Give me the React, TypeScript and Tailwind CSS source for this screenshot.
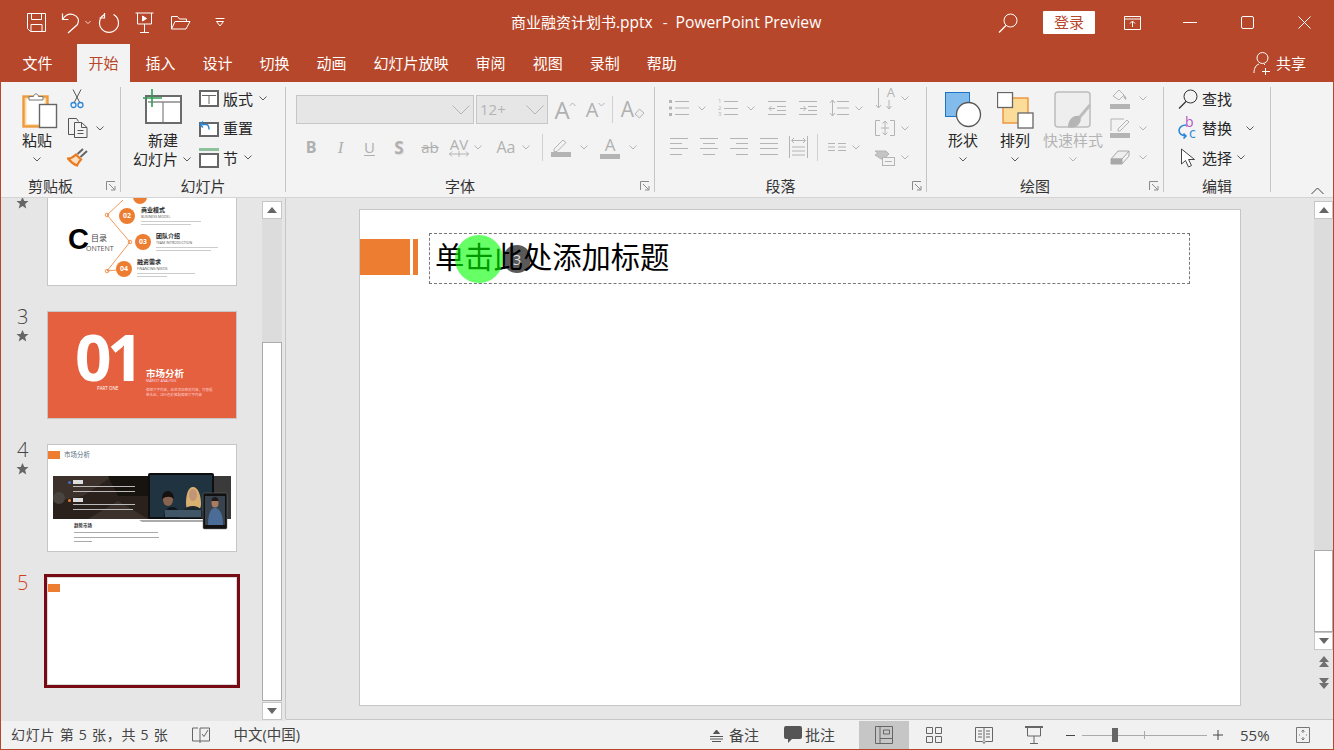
import React from 'react'

const GRAY = '#b4b4b4'
const DARK = '#5a5a5a'

function Chev({ c = DARK, className = '' }: { c?: string; className?: string }) {
  return (
    <span className={`flex w-[12px] shrink-0 justify-center ${className}`}>
      <svg width="8" height="5" viewBox="0 0 8 5" fill="none" stroke={c}>
        <path d="M.5.5 4 4 7.5.5" />
      </svg>
    </span>
  )
}

function Launcher() {
  return (
    <svg className="absolute right-[4px] top-[4px]" width="10" height="10" viewBox="0 0 10 10" fill="none" stroke="#8a8a8a">
      <path d="M.5 9V.5H9" />
      <path d="M3 3l5.500 5.500M9 5v4H5" />
    </svg>
  )
}

function Group({ w, label, launcher, children }: { w: string; label: string; launcher?: boolean; children: React.ReactNode }) {
  return (
    <>
      <div className={`flex h-full shrink-0 flex-col ${w}`}>
        <div className="flex h-[95px]">{children}</div>
        <div className={`relative h-[18px] text-center text-[15px] leading-[18px] text-[#333] ${launcher ? 'pr-[20px]' : ''}`}>
          {label}
          {launcher && <Launcher />}
        </div>
      </div>
      <div className="mt-[5px] h-[105px] w-px shrink-0 bg-[#c6c6c6]" />
    </>
  )
}

function SmallRow({ className = '', children }: { className?: string; children: React.ReactNode }) {
  return <div className={`flex h-[29.5px] items-center ${className}`}>{children}</div>
}

function BigBtn({ w, icon, label, disabled }: { w: string; icon: React.ReactNode; label: string; disabled?: boolean }) {
  return (
    <div className={`flex shrink-0 flex-col items-center pt-[9px] ${w}`}>
      <div className="flex h-[38px] items-center justify-center">{icon}</div>
      <div className={`mt-[1px] whitespace-nowrap text-[15px] leading-[20px] ${disabled ? 'text-[#b4b4b4]' : 'text-[#262626]'}`}>{label}</div>
      <Chev c={disabled ? GRAY : DARK} className="mt-[7px]" />
    </div>
  )
}

/* ---------- title bar icons ---------- */
function TitleIcons() {
  return (
    <div className="flex w-[510px] shrink-0 items-center pl-[25px] text-white">
      <svg width="21" height="21" viewBox="0 0 21 21" fill="none" stroke="#fff">
        <path d="M1.500 1.500h18v18h-15l-3-3z" />
        <path d="M5.500 1.500v6h10v-6M5 19.500v-7h11v7" />
      </svg>
      <svg className="ml-[14px]" width="20" height="22" viewBox="0 0 20 22" fill="none" stroke="#fff" strokeWidth="1.200">
        <path d="M1.500 1.500v6h6" />
        <path d="M1.500 7.500C4 3.500 8 1.500 12 2.500c5 1.500 7 6 4.500 10L7 21" />
      </svg>
      <Chev c="#fff" className="ml-[1px] scale-75" />
      <svg className="ml-[4px]" width="22" height="22" viewBox="0 0 22 22" fill="none" stroke="#fff" strokeWidth="1.200">
        <path d="M15.500 2.500a9.500 9.500 0 1 1-9 0" />
        <path d="M6.500 1v5H1.500" />
      </svg>
      <svg className="ml-[15px]" width="19" height="21" viewBox="0 0 19 21" fill="none" stroke="#fff">
        <path d="M.5 1h18M2.500 1v11h14V1M9.500 12v8M5 20.500h9" />
        <path d="M7.500 4v5l4-2.500z" fill="#fff" />
      </svg>
      <svg className="ml-[16px]" width="21" height="15" viewBox="0 0 21 15" fill="none" stroke="#fff">
        <path d="M1.500 14V1.500h6l2 2.500h7v2.500" />
        <path d="M1.500 14h14.500l4-7.500H5z" />
      </svg>
      <svg className="ml-[24px]" width="10" height="9" viewBox="0 0 10 9" fill="none" stroke="#fff">
        <path d="M.5.5h9M1.500 3.500 5 8l3.500-4.500z" />
      </svg>
    </div>
  )
}

function WindowButtons() {
  return (
    <div className="ml-auto flex items-center">
      <svg width="20" height="20" viewBox="0 0 20 20" fill="none" stroke="#fff">
        <circle cx="12.500" cy="7.500" r="6.500" />
        <path d="M8 12.500 1 19.500" strokeWidth="1.300" />
      </svg>
      <button className="ml-[25px] flex h-[23px] w-[52px] items-center justify-center rounded-[1px] bg-white text-[15px] leading-none text-[#b7472a]">登录</button>
      <svg className="ml-[29px]" width="17" height="14" viewBox="0 0 17 14" fill="none" stroke="#fff">
        <path d="M.5.500h16v13H.500zM.5 3h16" />
        <path d="M8.500 11V5.500M6 7.500l2.500-2.500L11 7.500" />
      </svg>
      <div className="ml-[42px] h-px w-[14px] bg-white" />
      <svg className="ml-[44px]" width="13" height="13" viewBox="0 0 13 13" fill="none" stroke="#fff">
        <rect x=".5" y=".5" width="12" height="12" rx="1.500" />
      </svg>
      <svg className="ml-[44px] mr-[22px]" width="13" height="13" viewBox="0 0 13 13" fill="none" stroke="#fff">
        <path d="M.5.5l12 12M12.500.5l-12 12" />
      </svg>
    </div>
  )
}

/* ---------- ribbon icons ---------- */
function PasteIcon() {
  return (
    <svg className="ml-[6px]" width="36" height="38" viewBox="0 0 36 38" fill="none">
      <rect x="1.500" y="5.500" width="24" height="30" fill="#fddca8" stroke="#ed9a3e" strokeWidth="2.400" />
      <rect x="4.500" y="8" width="18" height="25" fill="#fff" />
      <path d="M7 9V5.500h4.500C12 2 16 2 16.500 5.500H21V9z" fill="#fff" stroke="#777" />
      <rect x="17.500" y="13.500" width="17" height="23" fill="#fff" stroke="#666" strokeWidth="1.400" />
    </svg>
  )
}

function Scissors() {
  return (
    <svg width="14" height="20" viewBox="0 0 14 20" fill="none">
      <path d="M3 .5 9.500 13M11 .5 4.500 13" stroke="#555" />
      <circle cx="3.500" cy="16" r="2.500" stroke="#2b88d8" strokeWidth="1.300" />
      <circle cx="10.500" cy="16" r="2.500" stroke="#2b88d8" strokeWidth="1.300" />
    </svg>
  )
}

function CopyIcon() {
  return (
    <svg width="22" height="20" viewBox="0 0 22 20" fill="none" stroke="#555">
      <path d="M7 16.500H1.500V.5h8l2 3" />
      <path d="M7.500 4.500h7l5.500 5v10H7.500z" fill="#f3f3f3" />
      <path d="M14.500 4.500v5H20M10.500 12.500h6M10.500 15.500h6" />
    </svg>
  )
}

function BrushIcon() {
  return (
    <svg width="22" height="19" viewBox="0 0 22 19" fill="none">
      <path d="M1 10.500c4 0 6-2 8-4l5 5c-2 2-3 4-4 6C6 16 3 13 1 10.500z" fill="#fbe0c4" stroke="#ea7a1f" strokeWidth="2.200" />
      <path d="M10.500 6 16 1M13.500 9l6.500-6" stroke="#666" strokeWidth="2" />
    </svg>
  )
}

function NewSlideIcon() {
  return (
    <svg width="39" height="36" viewBox="0 0 39 36" fill="none">
      <rect x="3" y="7" width="35" height="27" fill="#fff" stroke="#6b6b6b" strokeWidth="2" />
      <path d="M5 13h32M20 13v20" stroke="#8a8a8a" strokeWidth="1.300" />
      <path d="M9 0v18M0 9h19" stroke="#2f9e55" strokeWidth="1.600" />
    </svg>
  )
}

function LayoutIcon() {
  return (
    <svg width="20" height="17" viewBox="0 0 20 17" fill="none" stroke="#666">
      <rect x="1" y="1" width="18" height="15" fill="#fff" strokeWidth="2" />
      <path d="M3 5.500h14M10 5.500V14" />
    </svg>
  )
}

function ResetIcon() {
  return (
    <svg width="20" height="17" viewBox="0 0 20 17" fill="none">
      <rect x="1" y="3" width="18" height="13" fill="#fff" stroke="#666" strokeWidth="2" />
      <path d="M1 4.500 4 1.500M1 4.500l3 3M1.500 4.500H7c2 0 3 2 3 5" stroke="#2b88d8" strokeWidth="1.500" />
    </svg>
  )
}

function SectionIcon() {
  return (
    <svg width="20" height="20" viewBox="0 0 20 20" fill="none">
      <rect x="1" y="6" width="18" height="13" fill="#fff" stroke="#666" strokeWidth="2" />
      <rect y="0" width="20" height="3" fill="#8dc29c" />
    </svg>
  )
}

function ShapesIcon() {
  return (
    <svg width="37" height="36" viewBox="0 0 37 36" fill="none">
      <rect x=".5" y=".5" width="24" height="24" fill="#82bcec" stroke="#1b74c4" />
      <circle cx="23.500" cy="22.500" r="12" fill="#fff" stroke="#555" strokeWidth="1.300" />
    </svg>
  )
}

function ArrangeIcon() {
  return (
    <svg width="37" height="37" viewBox="0 0 37 37" fill="none">
      <rect x="6" y="6" width="25" height="25" fill="#fbdc98" stroke="#ed8b2f" strokeWidth="1.300" />
      <rect x=".5" y=".5" width="15" height="15" fill="#fff" stroke="#666" strokeWidth="1.300" />
      <rect x="21" y="21" width="15" height="15" fill="#fff" stroke="#666" strokeWidth="1.300" />
    </svg>
  )
}

function QuickStyleIcon() {
  return (
    <svg width="38" height="38" viewBox="0 0 38 38" fill="none">
      <rect x="1" y="1" width="35" height="35" rx="3" fill="#eee" stroke="#bdbdbd" strokeWidth="1.500" />
      <path d="M36 14 25 27" stroke="#bdbdbd" strokeWidth="3" />
      <path d="M14 36c0-7 5-12 11-11 3 2 2 7-2 10-3 2-6 2-9 1z" fill="#b5b5b5" />
    </svg>
  )
}

function SearchIcon() {
  return (
    <svg width="20" height="20" viewBox="0 0 20 20" fill="none" stroke="#333">
      <circle cx="12.500" cy="7.500" r="6.500" />
      <path d="M8 12.500 1 19.500" strokeWidth="1.300" />
    </svg>
  )
}

function ReplaceIcon() {
  return (
    <div className="relative h-[22px] w-[20px]">
      <span className="absolute left-[7px] top-[-3px] text-[14px] leading-[15px] text-[#b455c3]">b</span>
      <span className="absolute left-[11px] top-[8px] text-[14px] leading-[15px] text-[#2b88d8]">c</span>
      <svg className="absolute left-0 top-[7px]" width="11" height="15" viewBox="0 0 11 15" fill="none" stroke="#2b88d8" strokeWidth="1.600">
        <path d="M8 1C4 1 1 3.500 1 6.500S4 12 8 12M5.500 9.500 8 12l-2.500 2.500" />
      </svg>
    </div>
  )
}

function CursorIcon() {
  return (
    <svg className="ml-[2px]" width="16" height="20" viewBox="0 0 16 20" fill="none" stroke="#444">
      <path d="M1.500 1v15l4-3.500 3 6.500 3-1.500-3-6h6z" fill="#fff" />
    </svg>
  )
}

function Lines({ w, ys, c = GRAY, h = 20 }: { w: number; ys: number[]; c?: string; h?: number }) {
  return (
    <svg width={w} height={h} viewBox={`0 0 ${w} ${h}`} fill="none" stroke={c}>
      {ys.map((y) => (
        <path key={y} d={`M0 ${y + 0.5}H${w}`} />
      ))}
    </svg>
  )
}

function AlignIcon({ d, className = '' }: { d: string; className?: string }) {
  return (
    <svg className={className} width="18" height="20" viewBox="0 0 18 20" fill="none" stroke={GRAY}>
      <path d={d} />
    </svg>
  )
}

function FontGroup() {
  const glyph = 'flex shrink-0 justify-center leading-none text-[#b0b0b0]'
  return (
    <div className="flex flex-col pl-[10px]">
      <div className="mt-[13px] flex h-[29px] items-center">
        <div className="flex h-[29px] w-[178px] items-center justify-end border border-[#c6c6c6] bg-[#e6e6e6] pr-[3px]">
          <svg width="18" height="10" viewBox="0 0 18 10" fill="none" stroke={GRAY}><path d="M.5.5 9 9 17.500.5" /></svg>
        </div>
        <div className="ml-[2px] flex h-[29px] w-[72px] items-center justify-between border border-[#c6c6c6] bg-[#e6e6e6] pl-[3px] pr-[3px] text-[15px] text-[#b4b4b4]">
          12+
          <svg width="18" height="10" viewBox="0 0 18 10" fill="none" stroke={GRAY}><path d="M.5.5 9 9 17.500.5" /></svg>
        </div>
        <span className={`${glyph} ml-[7px] w-[14px] text-[24px]`}>A</span>
        <svg className="mb-[10px]" width="7" height="5" viewBox="0 0 7 5" fill="none" stroke={GRAY}><path d="M.5 4 3.500 1l3 3" /></svg>
        <span className={`${glyph} ml-[10px] w-[12px] text-[20px]`}>A</span>
        <svg className="mb-[10px]" width="7" height="5" viewBox="0 0 7 5" fill="none" stroke={GRAY}><path d="M.5 1l3 3 3-3" /></svg>
        <div className="ml-[7px] h-[27px] w-px bg-[#d0d0d0]" />
        <span className={`${glyph} ml-[8px] w-[13px] text-[21px]`}>A</span>
        <svg className="mt-[7px]" width="11" height="11" viewBox="0 0 11 11" fill="#efefef" stroke={GRAY}><path d="M5.500 1 10 5 5.500 10 1 6z" /></svg>
      </div>
      <div className="mt-[9px] flex h-[28px] items-center">
        <span className={`${glyph} w-[30px] text-[16px] font-bold`}>B</span>
        <span className={`${glyph} w-[29px] font-['Liberation_Serif',serif] text-[17px] italic`}>I</span>
        <span className={`${glyph} w-[29px] text-[15px] underline underline-offset-2`}>U</span>
        <span className={`${glyph} w-[30px] text-[17px] font-bold [text-shadow:1px_1px_1px_#ddd]`}>S</span>
        <span className={`${glyph} w-[32px] text-[15px] line-through`}>ab</span>
        <span className="relative flex w-[26px] shrink-0 flex-col items-center text-[15px] leading-[14px] text-[#b0b0b0]">
          AV
          <svg width="20" height="6" viewBox="0 0 20 6" fill="none" stroke={GRAY}><path d="M0 3h20M3 .5 .5 3 3 5.500M17 .5 19.500 3 17 5.500M10 0v6" /></svg>
        </span>
        <Chev c={GRAY} />
        <span className={`${glyph} ml-[8px] w-[28px] text-[16px]`}>Aa</span>
        <Chev c={GRAY} />
        <div className="ml-[10px] h-[27px] w-px bg-[#d0d0d0]" />
        <svg className="ml-[8px]" width="20" height="20" viewBox="0 0 20 20" fill="none">
          <path d="M3 12 12 3l3 2.500-9 9H3z" stroke={GRAY} />
          <path d="M0 15h20v5H0z" fill={GRAY} />
        </svg>
        <Chev c={GRAY} className="ml-[7px]" />
        <div className="ml-[10px] flex h-[24px] w-[20px] shrink-0 flex-col items-center justify-end">
          <span className="text-[17px] leading-[17px] text-[#b0b0b0]">A</span>
          <div className="mt-[1px] h-[5px] w-[20px] bg-[#b4b4b4]" />
        </div>
        <Chev c={GRAY} className="ml-[7px]" />
      </div>
    </div>
  )
}

function ParagraphGroup() {
  return (
    <>
      <div className="flex w-[213px] shrink-0 flex-col">
        <div className="mt-[16px] flex h-[20px] items-center pl-[14px]">
          <svg width="20" height="20" viewBox="0 0 20 20" fill="none">
            <path d="M0 2h3v3H0zM0 8.500h3v3H0zM0 15h3v3H0z" fill={GRAY} />
            <path d="M6 3.500h14M6 10h14M6 16.500h14" stroke={GRAY} />
          </svg>
          <Chev c={GRAY} className="ml-[7px]" />
          <div className="ml-[10px] flex h-[20px] w-[20px] items-center">
            <span className="w-[6px] text-[6px] leading-[6.500px] text-[#b4b4b4]">1 2 3</span>
            <Lines w={14} ys={[3, 10, 16]} />
          </div>
          <Chev c={GRAY} className="ml-[7px]" />
          <svg className="ml-[11px]" width="20" height="20" viewBox="0 0 20 20" fill="none" stroke={GRAY}>
            <path d="M0 3.500h18M9 8.500h9M9 12.500h9M0 16.500h18M7 10.500H1M3.500 8 1 10.500 3.500 13" />
          </svg>
          <svg className="ml-[11px]" width="20" height="20" viewBox="0 0 20 20" fill="none" stroke={GRAY}>
            <path d="M0 3.500h18M9 8.500h9M9 12.500h9M0 16.500h18M1 10.500h6M4.500 8 7 10.500 4.500 13" />
          </svg>
          <svg className="ml-[10px]" width="20" height="20" viewBox="0 0 20 20" fill="none" stroke={GRAY}>
            <path d="M8 3.500h12M8 10h12M8 16.500h12M3.500 2v16M1 5l2.500-3L6 5M1 15l2.500 3L6 15" />
          </svg>
          <Chev c={GRAY} className="ml-[4px]" />
        </div>
        <div className="mt-[18px] flex h-[22px] items-center pl-[15px]">
          <AlignIcon d="M0 1.500h18M0 6.500h12M0 11.500h18M0 17.500h12" />
          <AlignIcon className="ml-[12px]" d="M0 1.500h18M3 6.500h12M0 11.500h18M3 17.500h12" />
          <AlignIcon className="ml-[12px]" d="M0 1.500h18M6 6.500h12M0 11.500h18M6 17.500h12" />
          <AlignIcon className="ml-[12px]" d="M0 1.500h18M0 6.500h18M0 11.500h18M0 17.500h18" />
          <svg className="ml-[11px]" width="19" height="22" viewBox="0 0 19 22" fill="none" stroke={GRAY}>
            <path d="M.5 0v22M18.500 0v22M3 11h13M3 15h13M3 19h13M3 4.500h13M5 2 2.500 4.500 5 7M14 2l2.500 2.500L14 7" />
          </svg>
          <div className="ml-[9px] h-[27px] w-px bg-[#d0d0d0]" />
          <svg className="ml-[10px]" width="18" height="10" viewBox="0 0 18 10" fill="none" stroke={GRAY}>
            <path d="M0 1.500h7M0 5h7M0 8.500h7M10 1.500h8M10 5h8M10 8.500h8" />
          </svg>
          <Chev c={GRAY} className="ml-[4px]" />
        </div>
      </div>
      <div className="flex flex-col pl-[7px] pt-[2px]">
        <SmallRow>
          <div className="relative h-[22px] w-[20px]">
            <span className="absolute right-0 top-[-3px] text-[13px] leading-[15px] text-[#b4b4b4]">A</span>
            <svg className="absolute left-0 top-0" width="20" height="22" viewBox="0 0 20 22" fill="none" stroke={GRAY}>
              <path d="M3.500 0v20M1 17l2.500 3L6 17M14 12v9M11.500 18l2.500 3 2.500-3" />
            </svg>
          </div>
          <Chev c={GRAY} className="ml-[4px]" />
        </SmallRow>
        <SmallRow>
          <svg width="20" height="16" viewBox="0 0 20 16" fill="none" stroke={GRAY}>
            <path d="M5 .5H.5v15H5M15 .5h4.500v15H15M10 1v14M7.500 3.500 10 1l2.500 2.500M7.500 12.500 10 15l2.500-2.500M6 8h8" />
          </svg>
          <Chev c={GRAY} className="ml-[4px]" />
        </SmallRow>
        <SmallRow>
          <svg width="20" height="16" viewBox="0 0 20 16" fill="none" stroke={GRAY}>
            <path d="M0 1h11l3 3-3 3 3 2H6L0 5l3-2z" fill="#c4c4c4" />
            <rect x="7.500" y="7.500" width="12" height="8" fill="#f3f3f3" />
            <path d="M10 11.500h7" />
          </svg>
          <Chev c={GRAY} className="ml-[4px]" />
        </SmallRow>
      </div>
    </>
  )
}

function DrawSideButtons() {
  return (
    <div className="flex flex-col pl-[7px] pt-[2px]">
      <SmallRow>
        <svg width="20" height="20" viewBox="0 0 20 20" fill="none">
          <path d="M3 7 9 1l5 5-5 5z" stroke={GRAY} fill="#f3f3f3" />
          <path d="M14 6c2 1 3 3 2 5-2-1-3-3-2-5z" fill={GRAY} />
          <path d="M0 15h20v5H0z" fill={GRAY} />
        </svg>
        <Chev c={GRAY} className="ml-[7px]" />
      </SmallRow>
      <SmallRow>
        <svg width="20" height="20" viewBox="0 0 20 20" fill="none">
          <path d="M1 13V1h13M8 11l9-9 2 2-9 9H8z" stroke={GRAY} />
          <path d="M0 15h20v5H0z" fill={GRAY} />
        </svg>
        <Chev c={GRAY} className="ml-[7px]" />
      </SmallRow>
      <SmallRow>
        <svg width="20" height="16" viewBox="0 0 20 16" fill="none" stroke="#a8a8a8">
          <path d="M1 9 8 1h11l-7 8z" fill="#eee" />
          <path d="M1 9v5h11V9z" fill="#a8a8a8" />
          <path d="M12 14l7-8V1" />
        </svg>
        <Chev c={GRAY} className="ml-[7px]" />
      </SmallRow>
    </div>
  )
}

function Ribbon() {
  return (
    <div className="flex h-[116px] shrink-0 border-b border-[#d4d4d4] bg-[#f3f3f3]">
      <Group w="w-[119px]" label="剪贴板" launcher>
        <div className="ml-[11px]">
          <BigBtn w="w-[50px]" icon={<PasteIcon />} label="粘贴" />
        </div>
        <div className="ml-[5px] flex flex-col pt-[2px]">
          <SmallRow className="pl-[3px]"><Scissors /></SmallRow>
          <SmallRow><CopyIcon /><Chev className="ml-[5px]" /></SmallRow>
          <SmallRow><BrushIcon /></SmallRow>
        </div>
      </Group>
      <Group w="w-[164px]" label="幻灯片">
        <div className="flex w-[78px] shrink-0 flex-col items-start pt-[7px]">
          <div className="ml-[22px]"><NewSlideIcon /></div>
          <div className="ml-[27px] mt-[6px] text-[15px] leading-[19px] text-[#262626]">新建</div>
          <div className="ml-[12px] flex items-center text-[15px] leading-[18px] text-[#262626]">幻灯片<Chev className="ml-[3px]" /></div>
        </div>
        <div className="flex flex-col pt-[2px] text-[15px] text-[#262626]">
          <SmallRow><LayoutIcon /><span className="ml-[4px]">版式</span><Chev className="ml-[4px]" /></SmallRow>
          <SmallRow><ResetIcon /><span className="ml-[4px]">重置</span></SmallRow>
          <SmallRow><SectionIcon /><span className="ml-[4px]">节</span><Chev className="ml-[4px]" /></SmallRow>
        </div>
      </Group>
      <Group w="w-[368px]" label="字体" launcher><FontGroup /></Group>
      <Group w="w-[271px]" label="段落" launcher><ParagraphGroup /></Group>
      <Group w="w-[236px]" label="绘图" launcher>
        <BigBtn w="w-[72px]" icon={<ShapesIcon />} label="形状" />
        <BigBtn w="w-[32px]" icon={<ArrangeIcon />} label="排列" />
        <div className="ml-[12px]">
          <BigBtn w="w-[60px]" icon={<QuickStyleIcon />} label="快速样式" disabled />
        </div>
        <DrawSideButtons />
      </Group>
      <Group w="w-[106px]" label="编辑">
        <div className="flex flex-col pl-[14px] pt-[2px] text-[15px] text-[#262626]">
          <SmallRow><SearchIcon /><span className="ml-[4px]">查找</span></SmallRow>
          <SmallRow><ReplaceIcon /><span className="ml-[4px]">替换</span><Chev className="ml-[12px]" /></SmallRow>
          <SmallRow><CursorIcon /><span className="ml-[6px]">选择</span><Chev className="ml-[3px]" /></SmallRow>
        </div>
      </Group>
      <div className="flex flex-1 items-end justify-end pb-[2px] pr-[9px]">
        <svg width="13" height="8" viewBox="0 0 13 8" fill="none" stroke="#444"><path d="M.5 7 6.500 1l6 6" /></svg>
      </div>
    </div>
  )
}

/* ---------- thumbnails ---------- */
function Star() {
  return (
    <svg className="ml-[15px]" width="13" height="12" viewBox="0 0 13 12" fill="#666">
      <path d="M6.500 0 8.300 4h4.200L9.100 6.900 10.300 11.500 6.500 9 2.700 11.500 3.900 6.900.5 4h4.200z" />
    </svg>
  )
}

function Dots({ lines }: { lines: string[] }) {
  return (
    <>
      {lines.map((c) => (
        <div key={c} className={c} />
      ))}
    </>
  )
}

function Slide2() {
  return (
    <div className="relative h-full w-full overflow-hidden bg-white">
      <svg className="absolute inset-0" width="190" height="108" viewBox="0 0 190 108" fill="none" stroke="#ed7d31" strokeWidth=".8">
        <path d="M75 21 59 36l23 27-23 29 10-1" />
        <circle cx="59" cy="36" r="1.800" />
        <circle cx="82" cy="63" r="1.800" />
        <circle cx="59" cy="92" r="1.800" />
      </svg>
      <span className="absolute left-[20px] top-[45px] font-['Liberation_Sans',sans-serif] text-[29px] font-bold leading-[30px] text-black">C</span>
      <span className="absolute left-[43px] top-[54px] text-[8px] leading-[10px] text-[#444]">目录</span>
      <span className="absolute left-[38px] top-[65px] text-[7px] leading-[9px] text-[#555]">ONTENT</span>
      {[
        ['left-[71px] top-[29px]', '02'],
        ['left-[87px] top-[55px]', '03'],
        ['left-[68px] top-[82px]', '04'],
      ].map(([pos, n]) => (
        <span key={n} className={`absolute flex h-[16px] w-[16px] items-center justify-center rounded-full bg-[#ed7d31] text-[7px] font-bold text-white ${pos}`}>{n}</span>
      ))}
      <span className="absolute left-[85px] top-[18px] h-[7px] w-[14px] rounded-b-full bg-[#ed7d31]" />
      <span className="absolute left-[93px] top-[28px] text-[6px] font-bold leading-[7px] text-[#222]">商业模式</span>
      <span className="absolute left-[93px] top-[35px] text-[3.500px] leading-[5px] text-[#555]">BUSINESS MODEL</span>
      <span className="absolute left-[108px] top-[54px] text-[6px] font-bold leading-[7px] text-[#222]">团队介绍</span>
      <span className="absolute left-[108px] top-[61px] text-[3.500px] leading-[5px] text-[#555]">TEAM INTRODUCTION</span>
      <span className="absolute left-[89px] top-[80px] text-[6px] font-bold leading-[7px] text-[#222]">融资需求</span>
      <span className="absolute left-[89px] top-[87px] text-[3.500px] leading-[5px] text-[#555]">FINANCING NEEDS</span>
      <Dots
        lines={[
          'absolute left-[106px] top-[18px] h-px w-[52px] bg-[#ccc]',
          'absolute left-[93px] top-[42px] h-px w-[60px] bg-[#ccc]',
          'absolute left-[93px] top-[45px] h-px w-[50px] bg-[#ccc]',
          'absolute left-[108px] top-[68px] h-px w-[62px] bg-[#ccc]',
          'absolute left-[108px] top-[71px] h-px w-[55px] bg-[#ccc]',
          'absolute left-[89px] top-[94px] h-px w-[58px] bg-[#ccc]',
          'absolute left-[89px] top-[97px] h-px w-[30px] bg-[#ccc]',
        ]}
      />
    </div>
  )
}

function Slide3() {
  return (
    <div className="relative h-full w-full overflow-hidden bg-[#e5603f] text-white">
      <span className="absolute left-[27px] top-[18px] text-[64px] font-bold leading-[54px] tracking-[-4.500px]">01</span>
      <span className="absolute left-[49px] top-[74px] text-[4.500px] leading-[5px]">PART ONE</span>
      <span className="absolute left-[98px] top-[56px] text-[9.500px] font-bold leading-[11px]">市场分析</span>
      <span className="absolute left-[98px] top-[67px] text-[3.500px] leading-[4px] text-[#fde]">MARKET ANALYSIS</span>
      <span className="absolute left-[98px] top-[76px] text-[3.500px] leading-[4px] text-[#fcc]">编辑文字内容，此处添加相关内容，可根据</span>
      <span className="absolute left-[98px] top-[81px] text-[3.500px] leading-[4px] text-[#fcc]">单击此，28%色彩搭配编辑文字内容</span>
    </div>
  )
}

function Slide4() {
  return (
    <div className="relative h-full w-full overflow-hidden bg-white">
      <span className="absolute left-0 top-[6px] h-[8px] w-[12px] bg-[#ed7d31]" />
      <span className="absolute left-[16px] top-[5px] text-[6.500px] leading-[10px] text-[#5a6d80]">市场分析</span>
      <svg className="absolute inset-0" width="190" height="108" viewBox="0 0 190 108">
        <rect x="5" y="31" width="178" height="43" fill="#2a211c" />
        <path d="M5 31h60L35 51 5 57zM40 74l30-18 30 18z" fill="#3d322b" />
        <path d="M60 31h40v20H70z" fill="#17130f" />
        <rect x="5" y="47" width="12" height="12" rx="6" fill="#4a4440" />
        <path d="M166 31h17v43h-17z" fill="#3a3a3a" />
        <path d="M91 75h76l-3 2H94z" fill="#aaa" />
        <rect x="100" y="28" width="66" height="46" rx="2" fill="#0e0e0e" />
        <rect x="102" y="30" width="62" height="42" fill="#1f3440" />
        <path d="M116 73c0-6 3-11 8-11s9 5 9 11z" fill="#10161a" />
        <ellipse cx="120" cy="55" rx="5" ry="6" fill="#8a6350" />
        <path d="M114 54c0-6 3-8 6-8s6 3 6 8c-3-3-8-3-12 0z" fill="#161110" />
        <path d="M138 58c0-8 2-16 7-16s8 8 8 17c0 4-2 6-4 6h-8c-2 0-3-3-3-7z" fill="#d8b070" />
        <ellipse cx="145" cy="50" rx="4" ry="6" fill="#c29478" />
        <path d="M131 73c1-7 7-12 14-12 6 0 11 5 12 12z" fill="#1c262d" />
        <path d="M117 65h36v7h-36z" fill="#415666" />
        <rect x="155" y="48" width="24" height="36" rx="1.500" fill="#111" stroke="#777" strokeWidth=".5" />
        <rect x="157" y="51" width="20" height="29" fill="#39434e" />
        <ellipse cx="167" cy="58" rx="3.500" ry="4.500" fill="#a87c60" />
        <path d="M163.500 56c0-3 2-4 3.500-4s3.500 1 3.500 4z" fill="#1f1a17" />
        <path d="M160 80c0-12 3-17 7-17s8 5 8 17z" fill="#4a6c97" />
      </svg>
      <Dots
        lines={[
          'absolute left-[20px] top-[36px] h-[3px] w-[3px] rounded-full bg-[#3f6fc4]',
          'absolute left-[25px] top-[35px] h-[4px] w-[10px] bg-[#ddd]',
          'absolute left-[25px] top-[41px] h-px w-[62px] bg-[#bbb]',
          'absolute left-[25px] top-[46px] h-px w-[62px] bg-[#bbb]',
          'absolute left-[20px] top-[54px] h-[3px] w-[3px] rounded-full bg-[#ed7d31]',
          'absolute left-[25px] top-[53px] h-[4px] w-[10px] bg-[#ddd]',
          'absolute left-[25px] top-[59px] h-px w-[62px] bg-[#bbb]',
          'absolute left-[25px] top-[64px] h-px w-[60px] bg-[#bbb]',
          'absolute left-[26px] top-[87px] h-px w-[84px] bg-[#aaa]',
          'absolute left-[26px] top-[92px] h-px w-[85px] bg-[#aaa]',
          'absolute left-[26px] top-[96px] h-px w-[18px] bg-[#aaa]',
        ]}
      />
      <span className="absolute left-[26px] top-[77px] text-[4.500px] font-bold leading-[7px] text-[#333]">趋势市场</span>
    </div>
  )
}

function Thumb({ n, star, children }: { n: number; star?: boolean; children: React.ReactNode }) {
  return (
    <div className="flex h-[133px] shrink-0">
      <div className="-mt-[7px] w-[46px]">
        <div className="pl-[16px] text-[20px] font-light leading-[26px] text-[#444]">{n}</div>
        {star && <Star />}
      </div>
      <div className="h-[108px] w-[190px] border border-[#c6c6c6]">{children}</div>
    </div>
  )
}

function ScrollBtn({ down }: { down?: boolean }) {
  return (
    <div className="flex h-[18px] shrink-0 items-center justify-center border border-[#c6c6c6] bg-white">
      <svg width="10" height="6" viewBox="0 0 10 6" fill="#666">
        <path d={down ? 'M0 0h10L5 6z' : 'M5 0l5 6H0z'} />
      </svg>
    </div>
  )
}

function SlidePanel() {
  return (
    <div className="flex h-full w-[261px] shrink-0 flex-col overflow-hidden">
      <div className="-mt-[20px]">
        <Thumb n={2} star><Slide2 /></Thumb>
        <Thumb n={3} star><Slide3 /></Thumb>
        <Thumb n={4} star><Slide4 /></Thumb>
        <div className="flex">
          <div className="-mt-[7px] w-[43px] pl-[16px] text-[20px] font-light leading-[26px] text-[#cf3f1c]">5</div>
          <div className="-mt-[3px] h-[114px] w-[196px] border-[3px] border-[#780a14] bg-white">
            <div className="h-full w-full border border-[#d9d9d9] pt-[6px]">
              <div className="h-[8px] w-[12px] bg-[#ed7d31]" />
            </div>
          </div>
        </div>
      </div>
    </div>
  )
}

function Editor() {
  return (
    <div className="flex h-[522px] flex-1 border-b border-[#c6c6c6] bg-[#e6e6e6]">
      <div className="flex-1 pl-[73px] pt-[11px]">
        <div className="h-[497px] w-[882px] border border-[#c6c6c6] bg-white pt-[23px]">
          <div className="flex items-start">
            <div className="mt-[6px] h-[36px] w-[50px] bg-[#ed7d31]" />
            <div className="ml-[3px] mt-[6px] h-[36px] w-[5px] bg-[#ed7d31]" />
            <div className="relative ml-[11px] flex h-[51px] w-[761px] items-center border border-dashed border-[#777] pb-[2px] pl-[5px] text-[29.300px] leading-none text-black">
              <span className="relative z-10">单击此处添加标题</span>
              {/* 录屏时的点击高亮 */}
              <span className="absolute left-[73px] top-[11px] z-0 flex h-[28px] w-[28px] items-center justify-center rounded-full bg-[#595959] text-[15px] leading-none text-[#ddd]">3</span>
              <span className="absolute left-[25px] top-[1px] z-20 h-[48px] w-[48px] rounded-full bg-[#00ff00]/60" />
            </div>
          </div>
        </div>
      </div>
      <div className="flex w-[19px] shrink-0 flex-col pt-[3px]">
        <ScrollBtn />
        <div className="h-[331px] shrink-0 bg-[#dcdcdc]" />
        <div className="h-[82px] shrink-0 border border-[#ababab] bg-white" />
        <ScrollBtn down />
        <div className="mt-[6px] flex flex-col items-center gap-[9px]">
          <svg width="12" height="12" viewBox="0 0 12 12" fill="#707070"><path d="M6 0l5 6H1zM6 5l5 6H1z" /></svg>
          <svg width="12" height="12" viewBox="0 0 12 12" fill="#707070"><path d="M1 1h10L6 7zM1 6h10l-5 6z" /></svg>
        </div>
      </div>
    </div>
  )
}

function StatusBar() {
  return (
    <div className="flex h-[28px] shrink-0 items-center bg-[#f1f1f1] text-[14px] leading-none text-[#444]">
      <span className="ml-[10px] tracking-[.75px]">幻灯片 第 5 张，共 5 张</span>
      <svg className="ml-[24px]" width="18" height="17" viewBox="0 0 18 17" fill="none" stroke="#666">
        <path d="M6 1H.5v13H8M8 1v15M8 1h9.500v13H8" />
        <path d="M10 7l2 2.500L16 3" />
      </svg>
      <span className="ml-[23px] text-[14.500px]">中文(中国)</span>
      <svg className="ml-[410px]" width="13" height="13" viewBox="0 0 13 13" fill="none" stroke="#555">
        <path d="M3.500 4.500 6.500 1l3 3.500z" fill="#555" />
        <path d="M0 7.500h13M0 10h13M2 12.500h9" />
      </svg>
      <span className="ml-[6px] text-[15px]">备注</span>
      <svg className="ml-[25px]" width="18" height="18" viewBox="0 0 18 18" fill="#555">
        <path d="M2 0h14a2 2 0 0 1 2 2v9a2 2 0 0 1-2 2H8l-4 4v-4H2a2 2 0 0 1-2-2V2a2 2 0 0 1 2-2z" />
      </svg>
      <span className="ml-[3px] text-[15px]">批注</span>
      <div className="ml-[24px] flex h-full w-[50px] items-center justify-center bg-[#c6c6c6]">
        <svg width="18" height="18" viewBox="0 0 18 18" fill="none" stroke="#666">
          <path d="M.5.500h17v17H.5zM5 .500v17M5 12.500h12.500M8.500 4h6v4h-6z" />
        </svg>
      </div>
      <div className="flex w-[50px] justify-center">
        <svg width="16" height="16" viewBox="0 0 16 16" fill="none" stroke="#666">
          <path d="M.5.500h6v6h-6zM9.500.500h6v6h-6zM.5 9.500h6v6h-6zM9.500 9.500h6v6h-6z" />
        </svg>
      </div>
      <div className="flex w-[50px] justify-center">
        <svg width="18" height="18" viewBox="0 0 18 18" fill="none" stroke="#666">
          <path d="M.5 1.500h17v14h-7l-1.500 2-1.500-2h-7zM9 1.500v14M3 5h4M3 8h4M3 11h4M11 5h4M11 8h4M11 11h4" />
        </svg>
      </div>
      <div className="flex w-[50px] justify-center">
        <svg width="18" height="18" viewBox="0 0 18 18" fill="none" stroke="#666">
          <path d="M0 1h18" strokeWidth="2" />
          <path d="M2.500 1v9h13V1M9 10v7M5 17.500h8" />
        </svg>
      </div>
      <div className="ml-[7px] h-px w-[9px] bg-[#444]" />
      <div className="relative ml-[7px] flex h-[14px] w-[125px] items-center">
        <div className="h-px w-full bg-[#aaa]" />
        <div className="absolute left-[62px] top-[3px] h-[8px] w-px bg-[#aaa]" />
        <div className="absolute left-[30px] top-0 h-[14px] w-[6px] bg-[#666]" />
      </div>
      <svg className="ml-[6px]" width="10" height="10" viewBox="0 0 10 10" stroke="#444"><path d="M0 5h10M5 0v10" /></svg>
      <span className="ml-[17px] text-[15px]">55%</span>
      <svg className="ml-[26px]" width="14" height="16" viewBox="0 0 14 16" fill="none" stroke="#777">
        <path d="M.5.500h13v15H.5z" />
        <path d="M7 3v3M5.500 4.500 7 3l1.500 1.500M7 13v-3M5.500 11.500 7 13l1.500-1.500M3 8h1M10 8h1" />
      </svg>
    </div>
  )
}

export default function App() {
  return (
    <div className="flex h-[750px] w-[1334px] flex-col overflow-hidden border border-[#b7472a] bg-[#e6e6e6] font-['Open_Sans','Noto_Sans_CJK_SC',sans-serif]">
      <div className="flex h-[43px] shrink-0 items-center bg-[#b7472a] text-white">
        <TitleIcons />
        <span className="flex items-baseline whitespace-nowrap text-[15px]">
          商业融资计划书
          <span className="text-[15.500px]">.pptx</span>
          <span className="ml-[10px]">-</span>
          <span className="ml-[8px] text-[15.700px]">PowerPoint Preview</span>
        </span>
        <WindowButtons />
      </div>

      <div className="flex h-[38px] shrink-0 items-stretch bg-[#b7472a] text-[15px] leading-[38px] text-white">
        <span className="ml-[8px] px-[13.500px]">文件</span>
        <span className="ml-[11px] bg-[#f3f3f3] pl-[11.500px] pr-[11.500px] text-[#b7472a]">开始</span>
        <span className="ml-[2px] px-[13.500px]">插入</span>
        <span className="px-[13.500px]">设计</span>
        <span className="px-[13.500px]">切换</span>
        <span className="px-[13.500px]">动画</span>
        <span className="px-[13.500px]">幻灯片放映</span>
        <span className="px-[13.500px]">审阅</span>
        <span className="px-[13.500px]">视图</span>
        <span className="px-[13.500px]">录制</span>
        <span className="px-[13.500px]">帮助</span>
        <div className="ml-auto flex items-center pr-[27px]">
          <svg width="19" height="24" viewBox="0 0 19 24" fill="none" stroke="#fff">
            <circle cx="9.500" cy="7" r="5.500" />
            <path d="M1 22c0-5 2-8 5-9M11 13.500h1M12.500 17v7M9 20.500h8" />
          </svg>
          <span className="ml-[4px]">共享</span>
        </div>
      </div>

      <Ribbon />

      <div className="flex h-[523px] shrink-0 bg-[#f1f1f1]">
        <div className="flex h-full shrink-0 bg-[#e6e6e6]">
          <SlidePanel />
          <div className="flex w-[20px] shrink-0 flex-col pt-[3px]">
            <ScrollBtn />
            <div className="h-[123px] shrink-0 bg-[#dcdcdc]" />
            <div className="h-[359px] shrink-0 border border-[#ababab] bg-white" />
            <div className="mt-[1px]"><ScrollBtn down /></div>
          </div>
          <div className="ml-[3px] h-[521px] w-px bg-[#c6c6c6]" />
        </div>
        <Editor />
      </div>

      <StatusBar />
    </div>
  )
}
